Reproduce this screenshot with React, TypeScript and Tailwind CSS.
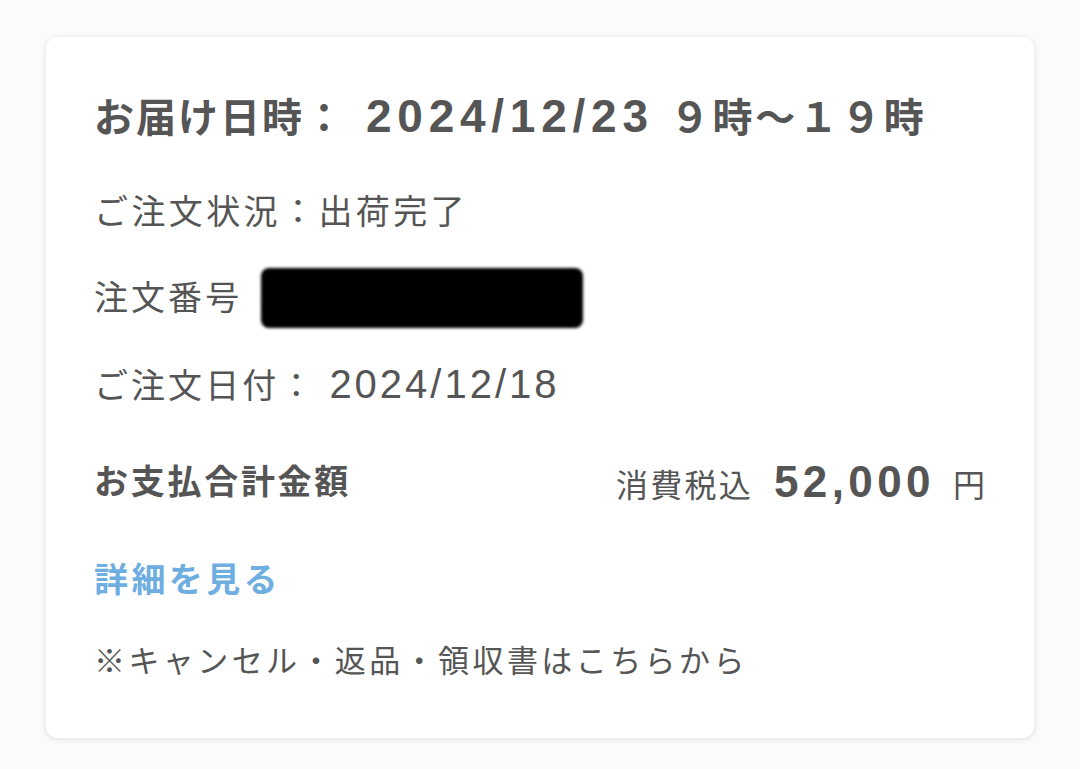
export default function App() {
  return (
    <div className="min-h-[769px] w-[1080px] bg-[#fbfbfb] pt-[37px] pl-[46px] font-['Liberation_Sans','Noto_Sans_CJK_JP',sans-serif] text-[#555555]">
      <div className="flex h-[701px] w-[988px] flex-col rounded-[12px] bg-white pl-[48px] pr-[49px] pt-[45px] shadow-[0_1px_6px_rgba(0,0,0,0.12)]">
        {/* お届け日時 */}
        <div className="flex h-[48px] items-baseline font-bold">
          <span className="text-[40px] tracking-[0.05em]">お届け日時：</span>
          <span className="ml-[20px] text-[46px] tracking-[0.125em]">2024/12/23</span>
          <span className="ml-[16px] text-[40px] tracking-[0.07em]">９時～１９時</span>
        </div>

        <div className="mt-[58px] flex h-[48px] items-center text-[34px] tracking-[0.1em]">
          ご注文状況：出荷完了
        </div>

        <div className="mt-[32px] flex h-[60px] items-center text-[34px] tracking-[0.09em]">
          <span>注文番号</span>
          <span className="ml-[6px] text-[#aaa]">：</span>
          <div className="-ml-[24px] h-[60px] w-[322px] rounded-[8px] bg-black blur-[1.5px]" />
        </div>

        <div className="mt-[26px] flex h-[48px] items-baseline">
          <span className="text-[34px] tracking-[0.09em]">ご注文日付：</span>
          <span className="ml-[13px] text-[40px] tracking-[0.075em]">2024/12/18</span>
        </div>

        <div className="mt-[56px] flex h-[48px] items-center justify-between">
          <span className="text-[34px] font-bold tracking-[0.08em]">お支払合計金額</span>
          <div className="flex items-baseline">
            <span className="text-[32px] tracking-[0.07em]">消費税込</span>
            <span className="ml-[21px] text-[44px] font-bold tracking-[0.1em]">52,000</span>
            <span className="ml-[18px] text-[32px]">円</span>
          </div>
        </div>

        <div className="mt-[50px] flex h-[48px] items-center text-[34px] font-bold tracking-[0.1em] text-[#6eaee0]">
          詳細を見る
        </div>

        <div className="mt-[34px] flex h-[48px] items-center text-[31px] tracking-[0.11em]">
          ※キャンセル・返品・領収書はこちらから
        </div>
      </div>
    </div>
  );
}
